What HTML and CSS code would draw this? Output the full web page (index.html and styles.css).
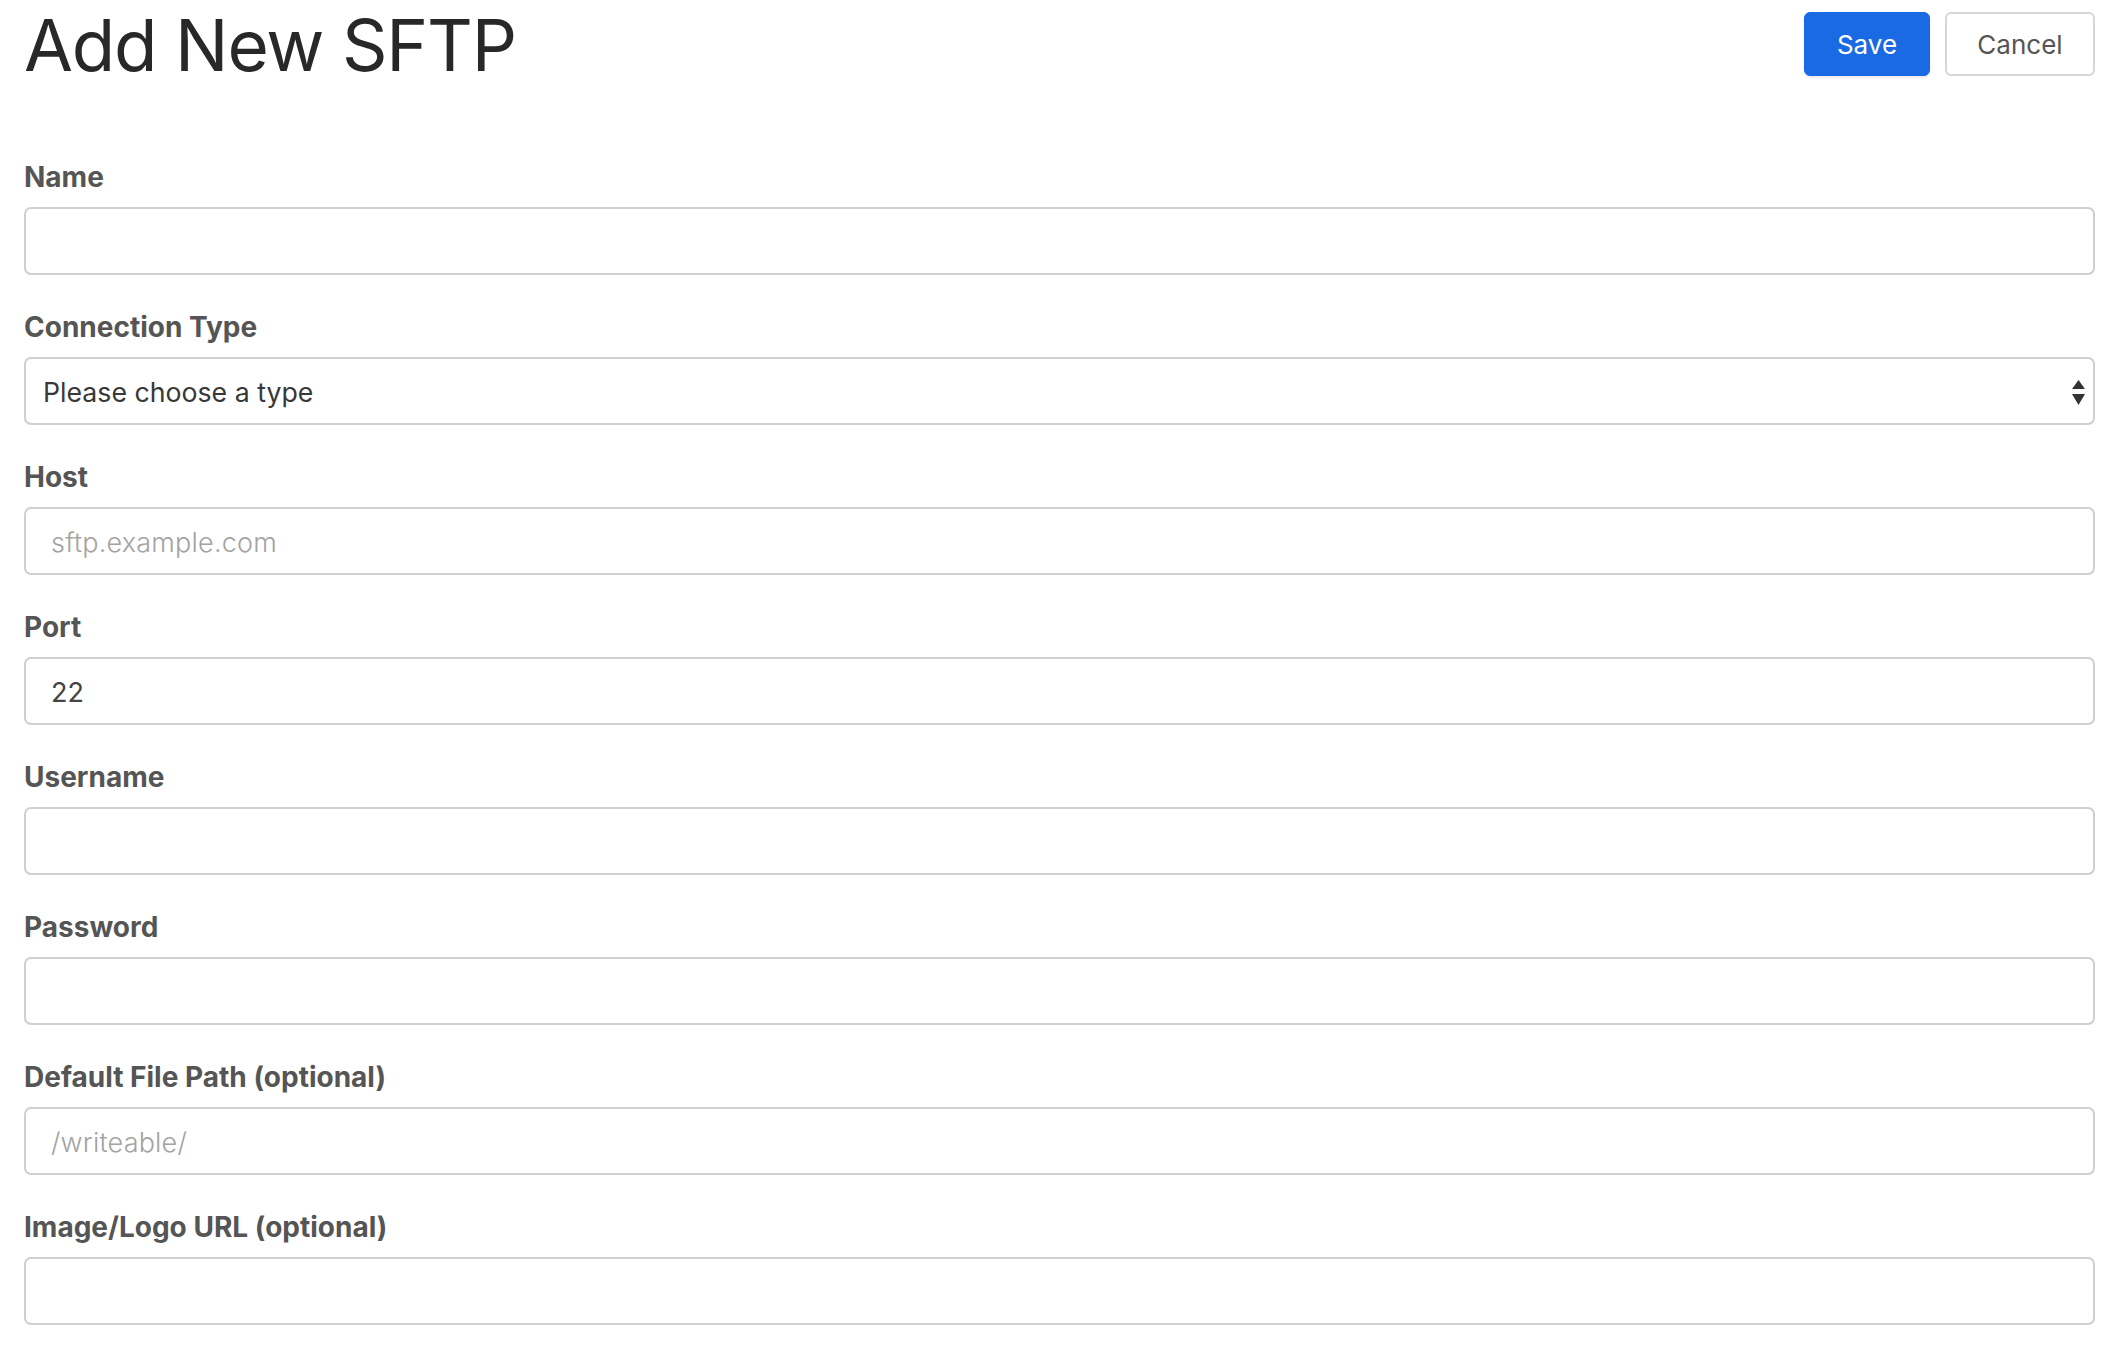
FILE: index.html
```html
<!DOCTYPE html>
<html>
<head>
<meta charset="utf-8">
<link rel="stylesheet" href="styles.css">
</head>
<body>
<div class="page">
  <header class="header">
    <h1 class="title">Add New SFTP</h1>
    <div class="actions">
      <button class="btn btn-primary">Save</button>
      <button class="btn btn-default">Cancel</button>
    </div>
  </header>
  <form class="form">
    <div class="group">
      <label class="label">Name</label>
      <input class="control" type="text">
    </div>
    <div class="group">
      <label class="label">Connection Type</label>
      <div class="select">
        <span class="select-text">Please choose a type</span>
        <svg class="select-arrows" width="13" height="25" viewBox="0 0 13 25"><path d="M6.5 0 L13 9 L0 9 Z" fill="#333"/><path d="M0 14 L13 14 L6.5 25 Z" fill="#333"/></svg>
      </div>
    </div>
    <div class="group">
      <label class="label">Host</label>
      <input class="control" type="text" placeholder="sftp.example.com">
    </div>
    <div class="group">
      <label class="label">Port</label>
      <input class="control" type="text" value="22">
    </div>
    <div class="group">
      <label class="label">Username</label>
      <input class="control" type="text">
    </div>
    <div class="group">
      <label class="label">Password</label>
      <input class="control" type="password">
    </div>
    <div class="group">
      <label class="label">Default File Path (optional)</label>
      <input class="control" type="text" placeholder="/writeable/">
    </div>
    <div class="group">
      <label class="label">Image/Logo URL (optional)</label>
      <input class="control" type="text">
    </div>
  </form>
</div>
</body>
</html>
```

FILE: styles.css
```css
* { box-sizing: border-box; }
html, body { margin: 0; padding: 0; background: #fff; }
body { font-family: Inter, "Noto Sans", sans-serif; }
.page { padding: 0 13px 0 24px; }
.header { display: flex; justify-content: space-between; align-items: flex-start; height: 160px; }
.title { margin: 0; font-size: 71px; font-weight: 400; line-height: 90px; color: #282828; letter-spacing: -1.2px; }
.actions { display: flex; gap: 15px; padding-top: 12px; }
.btn { height: 64px; border-radius: 6px; font-family: Inter, sans-serif; font-size: 26px; padding: 0; }
.btn-primary { width: 126px; background: #1a6ae3; border: 1px solid #1a6ae3; color: #fff; box-shadow: 0 2px 3px rgba(0,0,0,0.08); }
.btn-default { width: 150px; background: #fff; border: 2px solid #d6d6d6; color: #555; }
.form { display: flex; flex-direction: column; gap: 35px; }
.group { display: flex; flex-direction: column; gap: 13px; }
.label { font-size: 28px; font-weight: 700; color: #555; line-height: 34px; }
.control, .select { height: 68px; width: 100%; border: 2px solid #cfcfcf; border-radius: 7px; background: #fff; font-family: Inter, sans-serif; font-size: 27px; color: #444; padding: 3px 25px 0; outline: none; }
.control::placeholder { color: #a3a3a3; font-weight: 300; letter-spacing: 0.2px; }
.select { display: flex; align-items: center; justify-content: space-between; padding: 2px 8px 0 17px; }
.select-text { color: #383838; font-size: 26.7px; }
.select-arrows { display: block; }
```
